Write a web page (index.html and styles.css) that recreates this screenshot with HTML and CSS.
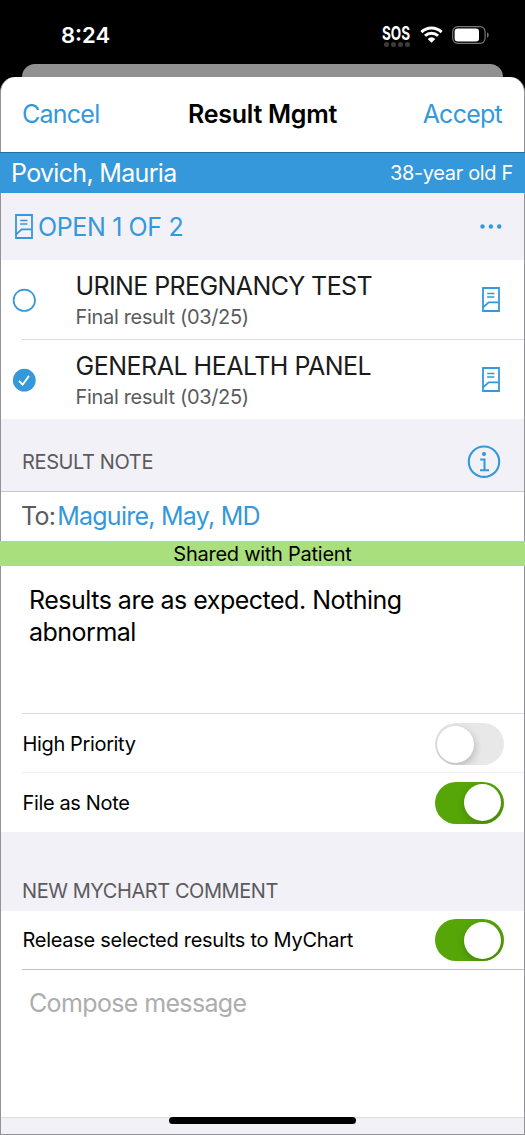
FILE: index.html
```html
<!DOCTYPE html>
<html lang="en">
<head>
<meta charset="utf-8">
<title>Result Mgmt</title>
<link rel="stylesheet" href="styles.css">
</head>
<body>
<svg class="defs" width="0" height="0">
  <symbol id="doc" viewBox="0 0 18 25">
    <path d="M1 1H17V24H1ZM1.5 20.2L6.6 15.3H17" fill="none" stroke="currentColor" stroke-width="1.8"/>
    <path d="M5.2 6.4H12.4M5.2 9.9H12.4" stroke="currentColor" stroke-width="1.5"/>
  </symbol>
</svg>
<div class="phone">
  <header class="status">
    <span class="time">8:24</span>
    <div class="indicators">
      <div class="carrier">
        <span class="sos">SOS</span>
        <div class="signal"><i></i><i></i><i></i><i></i></div>
      </div>
      <svg class="wifi" width="23" height="17" viewBox="0 0 23 17">
        <path d="M1.4 6.1A14.4 14.4 0 0 1 21.6 6.1M5 9.8A9.3 9.3 0 0 1 18 9.8" fill="none" stroke="#fff" stroke-width="3"/>
        <path d="M11.5 16.7L7.7 12.9A5.4 5.4 0 0 1 15.3 12.9Z" fill="#fff"/>
      </svg>
      <svg class="battery" width="38" height="18" viewBox="0 0 38 18">
        <rect x=".7" y=".7" width="32.4" height="16.6" rx="5" fill="none" stroke="#777" stroke-width="1.2"/>
        <rect x="2.6" y="2.6" width="24.4" height="12.8" rx="3" fill="#fff"/>
        <path d="M35 6.2Q36.8 7.4 36.8 9T35 11.8Z" fill="#777"/>
      </svg>
    </div>
  </header>
  <div class="back-card"></div>
  <main class="sheet">
    <nav class="nav">
      <span class="link cancel">Cancel</span>
      <span class="title">Result Mgmt</span>
      <span class="link accept">Accept</span>
    </nav>
    <div class="patient">
      <span class="patient-name">Povich, Mauria</span>
      <span class="patient-age">38-year old F</span>
    </div>
    <div class="open-bar">
      <svg class="doc" width="18" height="25"><use href="#doc"/></svg>
      <span class="open-label">OPEN 1 OF 2</span>
      <svg class="more" width="22" height="5" viewBox="0 0 22 5" fill="#3498db"><circle cx="2.5" cy="2.5" r="2.2"/><circle cx="10.9" cy="2.5" r="2.2"/><circle cx="19.2" cy="2.5" r="2.2"/></svg>
    </div>
    <div class="result">
      <svg class="check" width="24" height="24" viewBox="0 0 24 24"><circle cx="12.3" cy="12.3" r="10.7" fill="none" stroke="#3498db" stroke-width="1.7"/></svg>
      <div class="result-text">
        <span class="result-name urine">URINE PREGNANCY TEST</span>
        <span class="result-sub">Final result (03/25)</span>
      </div>
      <svg class="doc" width="18" height="25"><use href="#doc"/></svg>
    </div>
    <hr class="rule">
    <div class="result second">
      <svg class="check" width="24" height="24" viewBox="0 0 24 24"><circle cx="12.3" cy="12.2" r="11.4" fill="#3498db"/><path d="M7.1 12.8L10.6 16.7L17 7.9" fill="none" stroke="#fff" stroke-width="1.8"/></svg>
      <div class="result-text">
        <span class="result-name general">GENERAL HEALTH PANEL</span>
        <span class="result-sub">Final result (03/25)</span>
      </div>
      <svg class="doc" width="18" height="25"><use href="#doc"/></svg>
    </div>
    <div class="section note-head">
      <span class="section-label note-label">RESULT NOTE</span>
      <svg class="info" width="34" height="34" viewBox="0 0 34 34">
        <circle cx="17" cy="16.7" r="15.2" fill="none" stroke="#3498db" stroke-width="2.1"/>
        <circle cx="17" cy="9" r="2.1" fill="#3498db"/>
        <path d="M13.2 14.6H17.5V25.2M13 25.2H22" fill="none" stroke="#3498db" stroke-width="2"/>
      </svg>
    </div>
    <div class="to-row"><span class="to">To:</span><span class="recipient">Maguire, May, MD</span></div>
    <div class="shared"><span>Shared with Patient</span></div>
    <div class="note"><span class="note-text">Results are as expected. Nothing<br>abnormal</span></div>
    <hr class="rule">
    <div class="setting priority-row"><span class="high">High Priority</span><div class="toggle"><i class="knob"></i></div></div>
    <hr class="rule faint">
    <div class="setting file-row"><span class="file">File as Note</span><div class="toggle on"><i class="knob"></i></div></div>
    <div class="section comment-head"><span class="section-label comment-label">NEW MYCHART COMMENT</span></div>
    <div class="setting"><span class="release">Release selected results to MyChart</span><div class="toggle on"><i class="knob"></i></div></div>
    <hr class="rule dark">
    <div class="compose"><span>Compose message</span></div>
    <footer class="footer"><div class="home"></div></footer>
  </main>
</div>
</body>
</html>
```
FILE: styles.css
```css
* { box-sizing: border-box; }
body {
  margin: 0;
  background: #000;
  font-family: Inter, "Liberation Sans", sans-serif;
  color: #000;
}
.defs { display: block; }
svg { flex: none; }
span { white-space: nowrap; }
.phone { width: 525px; height: 1135px; overflow: hidden; display: flex; flex-direction: column; }

.status { height: 64px; flex: none; color: #fff; display: flex; justify-content: space-between; padding: 24px 36px 0 61px; }
.time { font-size: 22px; line-height: 22px; font-weight: 600; }
.indicators { display: flex; }
.carrier { width: 28px; margin-right: 9px; }
.sos { display: block; font-size: 18.5px; line-height: 18px; font-weight: 700; transform: scaleX(.73); transform-origin: left; margin-left: -1px; }
.signal { display: flex; justify-content: space-between; padding: 0 1px; }
.signal i { width: 5px; height: 5px; border-radius: 50%; background: #3c3c3c; }
.wifi { margin-top: 2px; margin-right: 9px; }
.battery { margin-top: 2px; margin-right: -1px; }

.back-card { height: 13px; flex: none; margin: 0 22px; background: #919191; border-radius: 13px 13px 0 0; }
.sheet {
  flex: 1;
  background: #fff;
  border: 1px solid #929297;
  border-top: 0;
  border-radius: 15px 15px 0 0;
  display: flex;
  flex-direction: column;
}
.nav { height: 75px; display: grid; grid-template-columns: 1fr auto 1fr; align-items: center; padding: 0 21px 2px; font-size: 25px; }
.link { color: #3498db; letter-spacing: -.75px; }
.accept { text-align: right; padding-right: 1px; }
.title { font-weight: 600; letter-spacing: -.27px; }

.patient {
  height: 41px; display: flex; justify-content: space-between; align-items: center;
  margin: 0 -1px; padding: 0 12px 0 11px;
  background: #3498db; border-top: 1px solid #286f9f; color: #fff;
}
.patient-name { font-size: 25px; letter-spacing: -.68px; }
.patient-age { font-size: 20px; letter-spacing: -.34px; }

.open-bar { height: 67px; background: #f2f1f7; display: flex; align-items: center; padding: 0 22px 0 14px; color: #3498db; }
.open-label { font-size: 25px; margin-left: 5px; letter-spacing: -.37px; }
.more { margin-left: auto; }

.result { height: 79px; display: flex; align-items: center; padding: 0 24px 0 11px; }
.doc { color: #3498db; }
.result-text { flex: 1; display: flex; flex-direction: column; margin-left: 39.5px; padding-top: 3px; }
.result-name { font-size: 25px; line-height: 32px; color: #1b1b1b; }
.urine { letter-spacing: -.6px; }
.general { letter-spacing: -.5px; }
.result-sub { font-size: 20px; line-height: 30px; color: #5b5b5e; letter-spacing: -.33px; }
.rule { width: 502px; height: 1px; flex: none; margin: 0 0 0 21px; border: 0; background: #dcdcdf; }
.rule.faint { background: #efeff1; }
.rule.dark { background: #c3c3c6; }

.section { background: #f2f1f7; display: flex; align-items: center; padding: 0 23px 0 21px; }
.note-head { height: 73px; padding-top: 13px; justify-content: space-between; border-bottom: 1px solid #c8c7cc; }
.comment-head { height: 79px; padding-top: 38px; }
.section-label { font-size: 20px; color: #5b5b5e; letter-spacing: -.38px; }
.comment-label { letter-spacing: -.43px; }

.to-row { height: 49px; display: flex; align-items: center; padding: 0 0 1px 20px; font-size: 25px; letter-spacing: -.75px; }
.to { color: #5b5b5e; margin-right: 2px; }
.recipient { color: #3498db; }
.shared { height: 25px; margin: 0 -1px; background: #a9e07d; display: flex; align-items: center; justify-content: center; font-size: 20px; letter-spacing: -.26px; }
.note { height: 147px; padding: 18px 28px; font-size: 25px; line-height: 32px; letter-spacing: -.5px; }

.setting { height: 58px; display: flex; align-items: center; justify-content: space-between; padding: 0 20.5px 0 21.5px; font-size: 20px; letter-spacing: -.28px; }
.priority-row { padding-top: 2px; }
.high, .file { letter-spacing: -.36px; }
.file-row { height: 59px; }
.toggle { width: 69px; height: 42px; border-radius: 21px; background: #e8e8e8; padding: 2.5px; display: flex; overflow: hidden; }
.toggle.on { background: #56a608; justify-content: flex-end; }
.knob { width: 37px; height: 37px; border-radius: 50%; background: #fff; box-shadow: 1px 3px 9px rgba(0,0,0,.22); }

.compose { height: 147px; padding: 17px 28px; font-size: 25px; line-height: 32px; color: #adadad; letter-spacing: -.64px; }
.footer { flex: 1; background: #f2f1f7; border-top: 1px solid #dddde0; }
.home { width: 187px; height: 7px; border-radius: 4px; background: #000; margin: -1px auto 0; }
```
